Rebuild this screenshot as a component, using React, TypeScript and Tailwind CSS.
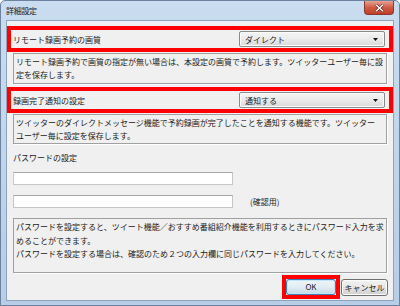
import React from "react";

const font = { fontFamily: '"Noto Sans CJK JP", "Noto Sans", sans-serif' };

function Combo({ value }: { value: string }) {
  return (
    <div className="w-[146px] h-[16px] border border-[#8a8a8a] rounded-[2px] bg-gradient-to-b from-[#f4f4f4] via-[#ebebeb] to-[#d9d9d9] flex items-center pl-[5px] pr-[6px] justify-between shadow-[inset_0_0_0_1px_#fbfbfb]">
      <span className="text-[8px] leading-[13px] text-[#1a1a1a]">{value}</span>
      <svg width="5" height="3" viewBox="0 0 5 3">
        <path d="M0 0 H5 L2.5 3 Z" fill="#111" />
      </svg>
    </div>
  );
}

function Desc({ h, children }: { h: string; children: React.ReactNode }) {
  return (
    <div
      className={`ml-[6px] w-[374px] ${h} border border-[#a0a0a0] shadow-[1px_1px_0_#ffffff] px-[2px] text-[8px] leading-[13px] text-[#1a1a1a]`}
    >
      {children}
    </div>
  );
}

export default function App() {
  return (
    <div
      className="relative w-[400px] h-[306px] bg-gradient-to-b from-[#c9dcf0] to-[#b8cde6] border border-[#6d829e] rounded-t-[5px] overflow-hidden"
      style={font}
    >
      <div className="h-[19px] pl-[5px] flex items-center text-[8px] text-[#1a1a1a] tracking-[-0.3px]">
        詳細設定
      </div>
      <div className="absolute right-[5px] top-0 w-[30px] h-[14px] rounded-b-[4px] border border-t-0 border-[#8a3a2c] bg-gradient-to-b from-[#e8a294] via-[#cf5a45] to-[#c13e28] flex items-center justify-center">
        <svg width="9" height="8" viewBox="0 0 9 8">
          <path d="M1 0.8 L8 7.2 M8 0.8 L1 7.2" stroke="#4a1a12" strokeWidth="2.6" />
          <path d="M1 0.8 L8 7.2 M8 0.8 L1 7.2" stroke="#ffffff" strokeWidth="1.5" />
        </svg>
      </div>
      <div className="ml-[5px] w-[388px] h-[281px] bg-[#f0f0f0] border border-[#8ea3bd] flex flex-col">
        <div className="mt-[5px] h-[26px] border-4 border-[#ff0000] flex items-center justify-between pl-[2px] pr-[4px]">
          <span className="text-[8px] leading-[13px] text-[#1a1a1a]">リモート録画予約の画質</span>
          <Combo value="ダイレクト" />
        </div>
        <Desc h="mt-[1px] h-[31px] pt-[1px]">
          <div>リモート録画予約で画質の指定が無い場合は、本設定の画質で予約します。ツイッターユーザー毎に設</div>
          <div>定を保存します。</div>
        </Desc>
        <div className="mt-[3px] h-[26px] border-4 border-[#ff0000] flex items-center justify-between pl-[2px] pr-[4px]">
          <span className="text-[8px] leading-[13px] text-[#1a1a1a]">録画完了通知の設定</span>
          <Combo value="通知する" />
        </div>
        <Desc h="mt-[1px] h-[30px] pt-[1px]">
          <div>ツイッターのダイレクトメッセージ機能で予約録画が完了したことを通知する機能です。ツイッター</div>
          <div>ユーザー毎に設定を保存します。</div>
        </Desc>
        <div className="ml-[6px] mt-[7px] text-[8px] leading-[13px] text-[#1a1a1a]">パスワードの設定</div>
        <div className="ml-[6px] mt-[8px] w-[220px] h-[13px] bg-white border border-[#c5c5c5] border-t-[#a8a8a8]" />
        <div className="ml-[6px] mt-[10px] flex items-center">
          <div className="w-[220px] h-[13px] bg-white border border-[#c5c5c5] border-t-[#a8a8a8]" />
          <span className="ml-[17px] text-[8px] leading-[13px] text-[#1a1a1a]">(確認用)</span>
        </div>
        <Desc h="mt-[10px] h-[55px] pt-[1px]">
          <div className="leading-[14px]">パスワードを設定すると、ツイート機能／おすすめ番組紹介機能を利用するときにパスワード入力を求</div>
          <div className="leading-[13px]">めることができます。</div>
          <div className="leading-[13px]">パスワードを設定する場合は、確認のため２つの入力欄に同じパスワードを入力してください。</div>
        </Desc>
        <div className="mt-[2px] flex justify-end pr-[5px]">
          <div className="border-4 border-[#ff0000]">
            <div className="w-[50px] h-[16px] rounded-[3px] border border-[#3c7fb1] bg-gradient-to-b from-[#f0f6fa] via-[#e3edf4] to-[#c4d8e6] shadow-[inset_0_0_0_1px_#bfe6f9] flex items-center justify-center text-[8px] text-[#1a1a1a]">
              OK
            </div>
          </div>
          <div className="ml-[1px] mt-[4px] w-[47px] h-[17px] rounded-[3px] border border-[#707070] bg-gradient-to-b from-[#f2f2f2] via-[#e6e6e6] to-[#cfcfcf] shadow-[inset_0_0_0_1px_#fcfcfc] flex items-center justify-center text-[8px] text-[#1a1a1a]">
            キャンセル
          </div>
        </div>
      </div>
    </div>
  );
}
